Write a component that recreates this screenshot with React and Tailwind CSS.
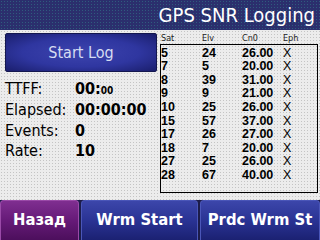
import React from "react";

const sats = [
  { sat: "5", elv: "24", cn0: "26.00", eph: "X" },
  { sat: "7", elv: "5", cn0: "20.00", eph: "X" },
  { sat: "8", elv: "39", cn0: "31.00", eph: "X" },
  { sat: "9", elv: "9", cn0: "21.00", eph: "X" },
  { sat: "10", elv: "25", cn0: "26.00", eph: "X" },
  { sat: "15", elv: "57", cn0: "37.00", eph: "X" },
  { sat: "17", elv: "26", cn0: "27.00", eph: "X" },
  { sat: "18", elv: "7", cn0: "20.00", eph: "X" },
  { sat: "27", elv: "25", cn0: "26.00", eph: "X" },
  { sat: "28", elv: "67", cn0: "40.00", eph: "X" },
];

const SoftKey = ({ label, purple, className = "" }) => (
  <button
    className={`flex items-center justify-center rounded-t-[4px] border-t border-x text-[16.5px] font-bold text-white ${
      purple
        ? "border-[#9a4aa8] bg-gradient-to-b from-[#7f2e90] via-[#661a78] to-[#4c0f5c]"
        : "border-[#4a56b8] bg-gradient-to-b from-[#3c46aa] via-[#2a3394] to-[#1b2172]"
    } ${className}`}
  >
    {label}
  </button>
);

const App = () => {
  return (
    <div className="w-[320px] h-[240px] flex flex-col overflow-hidden bg-[#ececec] bg-[radial-gradient(circle,#c4c4c4_0.7px,transparent_0.9px)] bg-[length:3px_3px] font-['DejaVu_Sans_Condensed','DejaVu_Sans',sans-serif] font-stretch-condensed text-black">
      <div className="h-[30px] flex items-center justify-end pr-[5px] bg-[#2b2f6d] bg-[radial-gradient(circle,#2f5c7e_0.7px,transparent_0.9px)] bg-[length:3px_3px]">
        <h1 className="text-[20px] leading-none text-white">GPS SNR Logging</h1>
      </div>

      <div className="flex flex-1">
        <div className="w-[160px] pl-[5px] pt-[3px]">
          <button className="w-[152px] h-[39px] rounded-[2px] border border-[#14174f] bg-[radial-gradient(ellipse_at_center,#3d44ae_0%,#2f36a0_55%,#1a1e6c_100%)] text-[16px] text-[#d6dcf2]">
            Start Log
          </button>
          <div className="mt-[7px] text-[16px]">
            <div className="flex h-[20.7px] items-center">
              <span className="w-[70px]">TTFF:</span>
              <span className="font-bold">
                00:<span className="text-[10px]">00</span>
              </span>
            </div>
            <div className="flex h-[20.7px] items-center">
              <span className="w-[70px]">Elapsed:</span>
              <span className="font-bold">00:00:00</span>
            </div>
            <div className="flex h-[20.7px] items-center">
              <span className="w-[70px]">Events:</span>
              <span className="font-bold">0</span>
            </div>
            <div className="flex h-[20.7px] items-center">
              <span className="w-[70px]">Rate:</span>
              <span className="font-bold">10</span>
            </div>
          </div>
        </div>

        <div className="flex-1 pr-[2px] pt-[3px]">
          <div className="grid grid-cols-[41px_40px_41px_1fr] h-[11px] items-center pl-[1px] text-[9px] leading-none text-[#222]">
            <span>Sat</span>
            <span>Elv</span>
            <span>Cn0</span>
            <span>Eph</span>
          </div>
          <div className="h-[149px] border border-black pt-[1px] font-['Liberation_Sans',sans-serif]">
            {sats.map((s) => (
              <div
                key={s.sat}
                className="grid grid-cols-[41px_40px_41px_1fr] h-[13.6px] items-center text-[12.5px] leading-none"
              >
                <span className="font-bold">{s.sat}</span>
                <span className="font-bold">{s.elv}</span>
                <span className="font-bold">{s.cn0}</span>
                <span>{s.eph}</span>
              </div>
            ))}
          </div>
        </div>
      </div>

      <div className="h-[40px] flex gap-[2px] bg-[#1c1c4a]">
        <SoftKey label="Назад" purple className="w-[79px]" />
        <SoftKey label="Wrm Start" className="w-[117px]" />
        <SoftKey label="Prdc Wrm St" className="flex-1" />
      </div>
    </div>
  );
};

export default App;
